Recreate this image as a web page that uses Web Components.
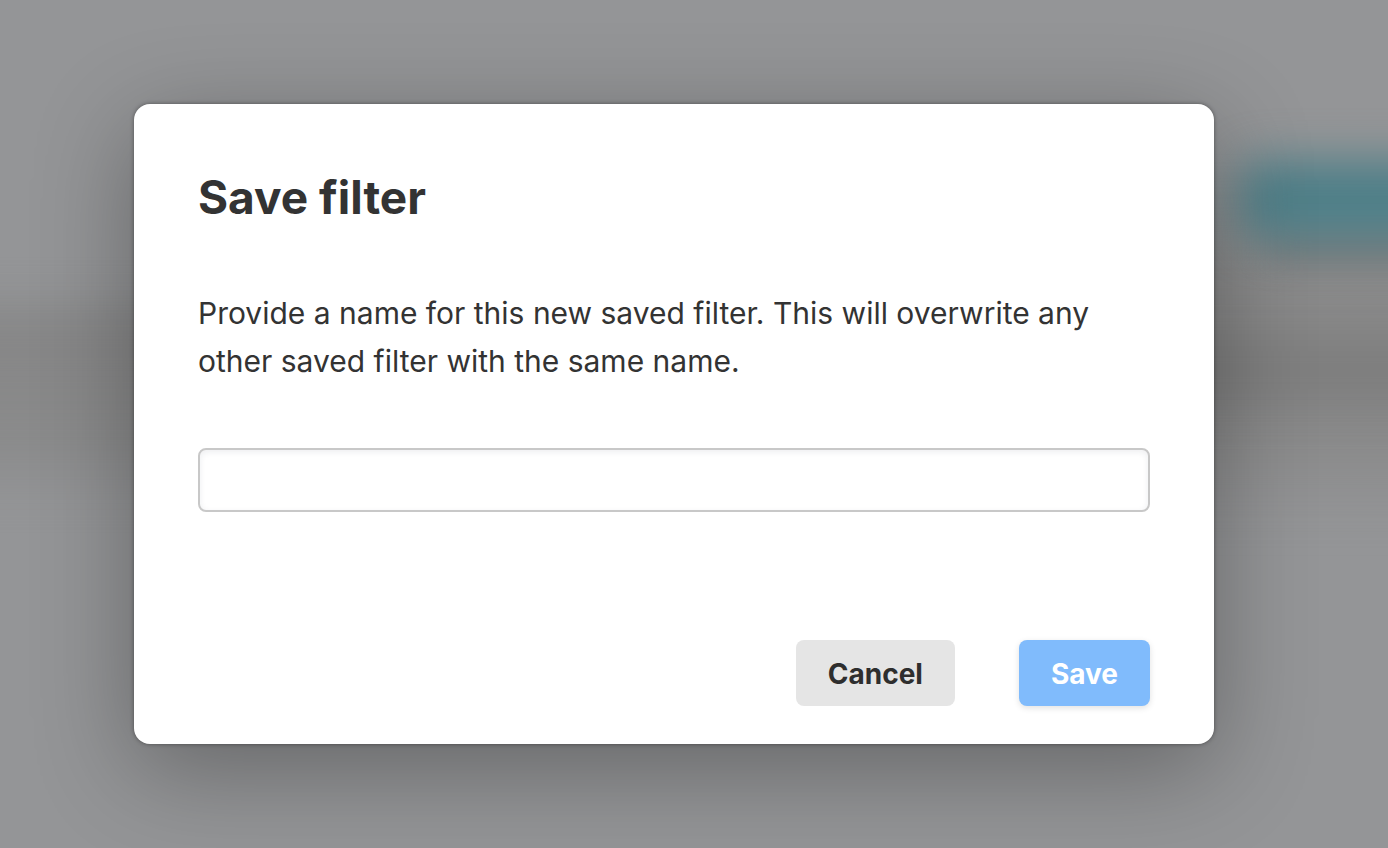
<!DOCTYPE html>
<html lang="en">
<head>
<meta charset="utf-8">
<meta name="viewport" content="width=device-width, initial-scale=1">
<title>Save filter</title>
<style>
  body { margin: 0; font-family: Inter, "Liberation Sans", sans-serif; color: #333; }
</style>
</head>
<body>
<modal-overlay>
  <modal-dialog>
    <span slot="title">Save filter</span>
    <text-field>Provide a name for this new saved filter. This will overwrite any other saved filter with the same name.</text-field>
    <action-button slot="actions">Cancel</action-button>
    <action-button slot="actions" variant="primary">Save</action-button>
  </modal-dialog>
</modal-overlay>

<script>
  const define = (name, html) => {
    const template = document.createElement('template');
    template.innerHTML = html;
    customElements.define(name, class extends HTMLElement {
      constructor() {
        super();
        this.attachShadow({ mode: 'open' }).append(template.content.cloneNode(true));
      }
    });
  };

  define('modal-overlay', `
    <style>
      :host {
        display: flex; align-items: flex-start; box-sizing: border-box; min-height: 100vh;
        padding: 104px 174px 104px 134px; position: relative; overflow: hidden;
        background: #949597;
      }
      .glow { position: absolute; pointer-events: none; }
      .row { left: -120px; right: 50%; top: 315px; height: 60px; background: #797878; filter: blur(24px); opacity: .45; }
      .rest { left: -120px; right: 50%; top: 320px; height: 150px; background: #868686; filter: blur(30px); opacity: .75; }
      .panel { left: 50%; right: -120px; top: 230px; height: 250px; background: #888; filter: blur(36px); opacity: .9; }
      .entry { left: 70%; right: -120px; top: 340px; height: 60px; background: #747474; filter: blur(26px); opacity: .6; }
      .shade { left: calc(100% - 120px); right: -120px; top: 225px; height: 36px; background: #666a6c; filter: blur(18px); opacity: .6; }
      .action { left: calc(100% - 150px); right: -120px; top: 160px; height: 80px; background: #4e7f88; border-radius: 24px; filter: blur(22px); }
      slot { display: block; flex: 1; position: relative; min-width: 0; }
    </style>
    <div class="glow row"></div><div class="glow rest"></div>
    <div class="glow panel"></div><div class="glow entry"></div>
    <div class="glow shade"></div><div class="glow action"></div>
    <slot></slot>`);

  define('modal-dialog', `
    <style>
      :host {
        display: block; box-sizing: border-box; padding: 64px 64px 38px; background: #fff; border-radius: 16px;
        box-shadow: 0 0 4px rgba(0,0,0,.4), 0 24px 100px rgba(0,0,0,.32);
      }
      h1 { margin: 0 0 63px; font-size: 46px; line-height: 58px; font-weight: 700; }
      footer { display: flex; justify-content: flex-end; gap: 64px; margin-top: 128px; }
    </style>
    <section role="dialog" aria-modal="true" aria-labelledby="title">
      <h1 id="title"><slot name="title"></slot></h1>
      <slot></slot>
      <footer><slot name="actions"></slot></footer>
    </section>`);

  define('text-field', `
    <style>
      :host { display: block; }
      label { display: block; margin-bottom: 63px; font-size: 30px; line-height: 48px; }
      input {
        display: block; box-sizing: border-box; width: 100%; height: 64px; padding: 0 16px;
        font: inherit; font-size: 30px; color: inherit; background: #fff;
        border: 2px solid #c8c8c8; border-radius: 8px; outline: none;
        box-shadow: inset 0 2px 6px rgba(30,40,60,.08);
      }
    </style>
    <label for="field"><slot></slot></label>
    <input id="field" type="text">`);

  define('action-button', `
    <style>
      :host { display: block; }
      button {
        display: block; padding: 2px 32px 0; border: 0; border-radius: 8px;
        font: inherit; font-size: 28px; line-height: 64px; font-weight: 700; color: #2e2e2e; background: #e5e5e5;
      }
      :host([variant="primary"]) button { color: #fff; background: #80bbfc; box-shadow: 0 2px 6px rgba(0,0,0,.12); }
    </style>
    <button type="button"><slot></slot></button>`);
</script>
</body>
</html>
